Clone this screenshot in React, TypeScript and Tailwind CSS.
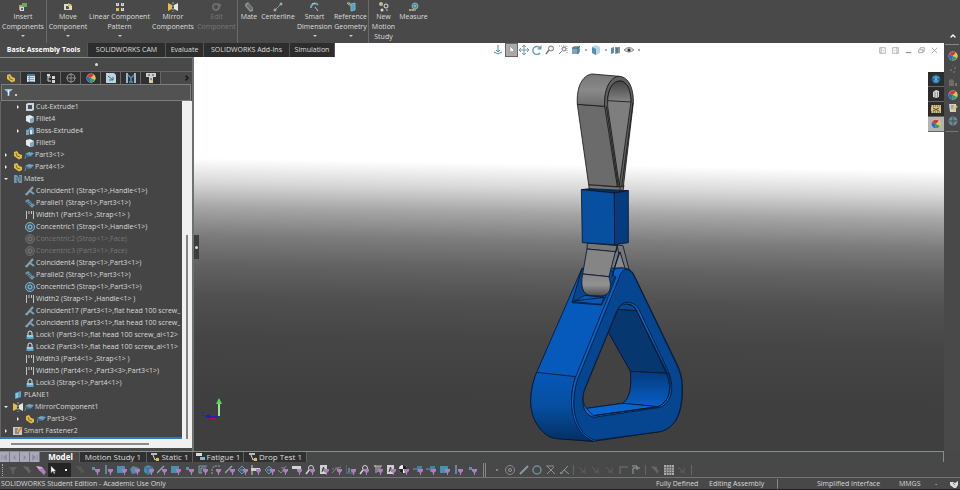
import { ChevronDown, ChevronUp } from 'lucide-react'
import { clsx } from 'clsx'
import type { ReactNode } from 'react'

const STEEL = '#6fa3bf'
const YELLOW = '#e3bd4a'
const PURPLE = '#b27cc2'

const GLYPHS: Record<string, ReactNode> = {
  insert: (
    <>
      <path d="M1 3h5v5H1z" fill="#b8aa62" />
      <path d="M4 1h5v4H4z" fill="#6ea65f" />
      <path d="M2 5h4v4H2z" fill="#dadada" />
      <path d="M3 6h2v2H3z" fill="#4b6f88" />
    </>
  ),
  move: (
    <>
      <path d="M1 2h6l2 2v4H1z" fill="#dcdcd4" />
      <path d="M3 4h3v3H3z" fill="#555" />
      <path d="M5 1l4 2-4 2z" fill={YELLOW} />
    </>
  ),
  pattern: (
    <>
      <path d="M1 1h3v3H1zM6 1h3v3H6zM6 6h3v3H6z" fill="#d6d6d6" />
      <path d="M1 6h3v3H1z" fill={YELLOW} />
      <path d="M2 2h1M7 2h1M7 7h1" stroke="#667" />
    </>
  ),
  mirror: (
    <>
      <path d="M0 1l4 2v4L0 9z" fill={YELLOW} />
      <path d="M10 1L6 3v4l4 2z" fill="#e6e6e6" />
      <path d="M5 0v10" stroke="#9ab" strokeDasharray="2 1" />
    </>
  ),
  edit: (
    <>
      <circle cx="4" cy="5" r="3" stroke="#6b6b6b" strokeWidth="2" />
      <path d="M5 8l4-5M6 2l3 1" stroke="#777" />
    </>
  ),
  clip: (
    <>
      <path d="M1 2l3-2 5 6v3l-3 1-5-6z" fill="#8a8f92" />
      <path d="M3 3l4 5M4 2l4 5" stroke="#555" />
    </>
  ),
  coincident: (
    <>
      <path d="M1 9l7-8" stroke="#8ba0ac" strokeWidth="2" />
      <path d="M5 5l4 3" stroke={STEEL} strokeWidth="2" />
      <path d="M0 8h3" stroke={STEEL} />
    </>
  ),
  parallel: (
    <>
      <path d="M0 3l3-2 7 6-3 3z" fill="#6d93a7" />
      <path d="M2 4l4 3M4 3l4 3" stroke="#3f5663" />
    </>
  ),
  width: <path d="M1.500 1v8M8.500 1v8M4 1v3M6.500 1v3" stroke="#c4c4c4" />,
  concentric: (
    <>
      <circle cx="5" cy="5" r="4.500" fill="#40606f" stroke="#86b4ca" />
      <circle cx="5" cy="5" r="2" stroke="#8fc0d8" />
    </>
  ),
  concentricOff: (
    <>
      <circle cx="5" cy="5" r="4.500" fill="#555" stroke="#6b6b6b" />
      <circle cx="5" cy="5" r="2" stroke="#777" />
    </>
  ),
  lock: (
    <>
      <path d="M3 5V3a2 2 0 0 1 4 0v2" stroke="#dce6ea" />
      <path d="M1.500 5h7v4h-7z" fill="#55a5cf" />
      <path d="M2 6h6" stroke="#e7f4fa" />
    </>
  ),
  part: (
    <>
      <path d="M1 2l3-1 2 3 3 1v3L6 9.500 1 6z" fill={YELLOW} />
      <path d="M3 3l1 3 3 1" stroke="#8a6a17" />
    </>
  ),
  cap: (
    <>
      <path d="M1 4l4-2 5 1-3 3z" fill={STEEL} />
      <path d="M2 5l-1 4M3 6h4l1-2" stroke="#4f93b8" />
    </>
  ),
  cut: (
    <>
      <path d="M1 2l2-1h6v7L7 9H1z" fill="#cfd6da" />
      <path d="M3 3h4v4H3z" fill="#41525c" />
    </>
  ),
  fillet: (
    <>
      <path d="M1 2l4-1 4 2v5L5 9 1 7z" fill="#e3e9ec" />
      <path d="M5 5l4-2v5L5 9z" fill="#79aac5" />
    </>
  ),
  boss: (
    <>
      <path d="M1 4l3-1v6H1zM4 2l3-1 2 2v5L5 9z" fill={STEEL} />
      <path d="M5 4h2v4H5z" fill="#dbe6eb" />
    </>
  ),
  mates: (
    <>
      <path d="M1 1h3l2 3V1h3v8H6L4 6v3H1z" fill="#6f97aa" />
      <path d="M4 3v5M7 2v5" stroke="#46616e" />
    </>
  ),
  plane: (
    <>
      <path d="M2 3l6-2v6L2 9z" fill="#5ba5cd" />
      <path d="M4 3v5" stroke="#b9e0f2" />
    </>
  ),
  fastener: (
    <>
      <path d="M0 1h9v8H0z" fill="#cfc8bd" />
      <path d="M2 3h3M2 5h2M2 7h4" stroke="#554c44" />
      <path d="M5 6l4-5" stroke="#d5862f" strokeWidth="2" />
    </>
  ),
  centerline: (
    <>
      <path d="M1 9l8-8" stroke={STEEL} />
      <circle cx="2" cy="8" r="1" stroke="#bbb" />
      <circle cx="8" cy="2" r="1" stroke="#bbb" />
    </>
  ),
  dimension: (
    <>
      <path d="M1 6a4 4 0 0 1 7-3" stroke={STEEL} strokeWidth="2" />
      <path d="M2 2l3-1M5 5l3 4" stroke="#b8c6cc" />
    </>
  ),
  reference: (
    <>
      <path d="M1 1l2 2M5 2l4-1v7L5 9z" fill="#5a9fc0" stroke="#73b6d3" />
      <path d="M1 1h3v3" stroke="#d8c070" />
    </>
  ),
  motion: (
    <>
      <circle cx="2" cy="2" r="2" fill="#cdb896" />
      <circle cx="7" cy="4" r="2" stroke="#e4e4e4" />
      <circle cx="3" cy="8" r="1.500" fill="#d9d9d9" />
      <circle cx="8" cy="8" r="1" fill="#999" />
    </>
  ),
  measure: (
    <>
      <circle cx="6" cy="4" r="3" fill="#3d91aa" stroke="#87aebb" />
      <path d="M0 8h7M1 7v2M4 7v2" stroke="#cfc28e" />
      <path d="M5 4h2" stroke="#e9d36c" />
    </>
  ),
  list: (
    <>
      <path d="M1 1h8v8H1z" fill="#d8e2e7" />
      <path d="M1 2h8" stroke="#3a7ea6" strokeWidth="2" />
      <path d="M2 4.500h6M2 6.500h6M2 8.500h6M3.500 3v6" stroke="#5a87a1" strokeWidth=".7" />
    </>
  ),
  tree: (
    <>
      <path d="M2 1v7h3M2 4h3" stroke="#d5d5d5" />
      <path d="M1 1h3v2H1zM6 3h3v3H6zM6 7h3v3H6z" fill="#d5d5d5" />
    </>
  ),
  target: (
    <>
      <circle cx="5" cy="5" r="4" stroke="#8d8d8d" />
      <path d="M5 0v10M0 5h10" stroke="#8d8d8d" />
    </>
  ),
  ball: (
    <>
      <circle cx="5" cy="5" r="4.500" fill="#e0e0e0" />
      <path d="M5 5L1 3a4.500 4.500 0 0 1 7-1z" fill="#d4392d" />
      <path d="M5 5l3-3a4.500 4.500 0 0 1 1 5z" fill="#e8c53b" />
      <path d="M5 5l4 2a4.500 4.500 0 0 1-5 2z" fill="#39a04a" />
      <path d="M5 5L4 9.400A4.500 4.500 0 0 1 1 3z" fill="#3568b8" />
    </>
  ),
  sheet: (
    <>
      <path d="M0 0h8l2 2v8H0z" fill="#bfd3dd" />
      <path d="M2 3l5 4M7 4v3H3" stroke="#2d6f93" />
    </>
  ),
  brace: (
    <>
      <path d="M0 0h2v10H0zM8 0h2v10H8z" fill="#9fb7c3" />
      <path d="M2 2l3 3v4M8 2L5 5M3 9h4" stroke="#4a93b9" strokeWidth="1.500" />
    </>
  ),
  bolt: (
    <>
      <path d="M0 0h10v4H0zM3 3h4v7H3z" fill="#cfcfcf" />
      <path d="M2 2h2M6 2h2M4 6h2" stroke="#444" />
      <path d="M4 8h3" stroke={YELLOW} />
    </>
  ),
  funnel: (
    <>
      <path d="M0 1h10L6 5v4H4V5z" fill="#8fc3dc" />
      <path d="M5 2v6" stroke="#eef7fb" />
    </>
  ),
  anchor: <path d="M5 0v7M3 5l2 2 2-2M1 7l4 2 4-2" stroke="#4f8aac" />,
  arrow: <path d="M3 1v7l2-2 1 3 1-1-1-2h2z" fill="#fff" stroke="#777" strokeWidth=".5" />,
  pan: <path d="M5 0v10M0 5h10M3 2l2-2 2 2M3 8l2 2 2-2M2 3L0 5l2 2M8 3l2 2-2 2" stroke="#6f9aaf" />,
  rotate: (
    <>
      <path d="M8 3a4 4 0 1 0 0 5" stroke="#67a0bc" strokeWidth="1.500" />
      <path d="M9.500 0v4.500H5z" fill="#67a0bc" />
    </>
  ),
  zoom: (
    <>
      <circle cx="6" cy="3.500" r="2.500" fill="#e9f1f5" stroke="#777" />
      <path d="M4 5L1 9" stroke="#777" strokeWidth="1.500" />
    </>
  ),
  zoomArea: (
    <>
      <path d="M1 1h8v8" stroke="#999" strokeDasharray="1 1" />
      <circle cx="6" cy="4" r="2" fill="#e9f1f5" stroke="#777" />
      <path d="M4 6L1 9" stroke="#777" />
    </>
  ),
  cube: (
    <>
      <path d="M1 3l2-2h6v6L7 9H1z" fill="#79a6bd" />
      <path d="M1 3h6v6M7 3l2-2" stroke="#47606d" />
    </>
  ),
  box: (
    <>
      <path d="M1 2l4-2 4 2v6l-4 2-4-2z" fill="#b9d5e2" />
      <path d="M1 2l4 2v6L1 8z" fill="#4f93b4" />
    </>
  ),
  twin: (
    <>
      <path d="M0 3l3-1v6l-3 1z" fill="#4f93b4" />
      <path d="M4 2h5v6l-5 1z" fill="#829aa7" />
      <path d="M6 3v5" stroke="#465661" />
    </>
  ),
  eye: (
    <>
      <path d="M0 5q5-5 10 0-5 4-10 0z" fill="#d5d5d5" stroke="#888" />
      <circle cx="5" cy="5" r="1.500" fill="#333" />
    </>
  ),
  panelLeft: <path d="M1 1h8v8H1zM3 1v8M6 4v2" stroke="#999" />,
  panelRight: <path d="M1 1h8v8H1zM7 1v8M4 4v2" stroke="#999" />,
  minimize: <path d="M1 8h8" stroke="#888" strokeWidth="1.500" />,
  restore: <path d="M3 3V1h6v5H7M1 4h6v4H1z" stroke="#888" />,
  close: <path d="M1 1l8 8M9 1L1 9" stroke="#888" />,
  wheel: (
    <>
      <circle cx="5" cy="5" r="4.500" fill="#1d658e" />
      <path d="M2 4q3-3 6 0M5 3v6M3 8l2-4 2 4" stroke="#71b9dc" />
    </>
  ),
  books: (
    <>
      <path d="M2 3l3-2 3 1v6L5 9 2 8z" fill="#d8d8d8" />
      <path d="M4 3v6M6.500 3v5" stroke="#666" strokeWidth=".7" />
    </>
  ),
  film: (
    <>
      <path d="M0 1h10v8H0z" fill="#d8c07d" />
      <path d="M0 2h10M0 8h10" stroke="#5b5240" strokeDasharray="1 1" />
      <path d="M2 4l6 3M8 4L2 7" stroke="#5b5240" />
    </>
  ),
  dots: <path d="M2 5h2v2H2zM6 3h2v2H6zM5 7h2v2H5zM4 1h1v1H4z" fill="#686868" />,
  gray: (
    <>
      <path d="M1 3l3-1 2 2v5H1z" fill="#6d6d6d" />
      <path d="M7 6h2v3H7z" fill="#777" />
    </>
  ),
  note: (
    <>
      <path d="M1 1h7v8H2z" fill="#cfd2cf" />
      <path d="M3 3h3M3 5h2" stroke="#777" />
      <path d="M5 7l4-4" stroke={YELLOW} strokeWidth="2" />
    </>
  ),
  globe: (
    <>
      <circle cx="5" cy="5" r="4.500" fill="#6d8a99" />
      <path d="M5 1v8M1 5h8" stroke="#3e4d55" />
    </>
  ),
  world: (
    <>
      <path d="M1 3h3l2 1 3-2v4L7 9H5L1 6z" fill="#dcdcdc" />
      <path d="M4 4l2 2" stroke="#777" />
    </>
  ),
  study: (
    <>
      <path d="M1 1h6v2H1z" fill="#bcbcbc" />
      <path d="M3 3l2 5 3-2" stroke="#d9d9d9" />
      <path d="M6 6h3v3H6z" fill={YELLOW} />
    </>
  ),
  fatigue: (
    <>
      <path d="M0 1h6v3H0z" fill="#dcdcdc" />
      <path d="M4 5h5v3H4z" fill="#8db4c8" />
    </>
  ),
  first: <path d="M2 2v6M7 2L4 5l3 3z" fill="#8d8ba4" stroke="#8d8ba4" />,
  prev: <path d="M6 2L3 5l3 3z" fill="#8d8ba4" />,
  next: <path d="M4 2l3 3-3 3z" fill="#8d8ba4" />,
  last: <path d="M8 2v6M3 2l3 3-3 3z" fill="#8d8ba4" stroke="#8d8ba4" />,
  // sketch and filter symbols of the lower bar
  tri: <path d="M1 2h8L6 6v3H4V6z" fill="#606060" />,
  tris: <path d="M1 1l6 1v5L4 5zM5 5h4L7 9z" fill="#666" />,
  filters: (
    <>
      <path d="M0 1l6 1 3 5-5-1z" fill="#d5b3e0" />
      <path d="M2 4l5-1 3 4-2 3-3-3z" fill={PURPLE} />
    </>
  ),
  vertex: <path d="M2 2h3v3H2z" fill="#5c8fa9" />,
  edge: <path d="M3 0v9" stroke="#6e9eb5" strokeWidth="1.500" />,
  face: <path d="M0 1h8v7H0z" fill="#4b8fb5" />,
  surface: <path d="M0 4l3-3 6 2-2 5-5 1z" fill="#568ba7" />,
  solid: (
    <>
      <path d="M0 2l4-2 5 2v5L4 10 0 7z" fill="#4689ad" />
      <path d="M0 2l4 2 5-2M4 4v5" stroke="#2f617e" strokeWidth=".7" />
    </>
  ),
  slash: <path d="M0 8l7-7" stroke="#87a6b5" strokeWidth="1.500" />,
  frame: <path d="M1 8V1h8M3 8V3h5M1 8h3" stroke="#84a3b1" />,
  arc: <path d="M1 9V5q0-4 5-4h3" stroke="#9aaab0" strokeDasharray="2 1" />,
  diamond: <path d="M0 5l4-4 4 4-4 4zM2 5h4" stroke="#6b95aa" fill="#3f5865" />,
  cross: (
    <>
      <path d="M1 0v10" stroke="#d0d0d0" />
      <path d="M0 3h9v3H0z" fill="#d0d0d0" />
    </>
  ),
  check: <path d="M0 5l3 3 5-7M3 3h3" stroke="#8a8a8a" />,
  tag: <path d="M0 1h9v3H0z" fill="#d2d2d2" />,
  lens: (
    <>
      <circle cx="6" cy="3" r="2.500" stroke="#d2d2d2" />
      <path d="M1 9l3-4" stroke="#d2d2d2" strokeWidth="1.500" />
    </>
  ),
  letter: (
    <>
      <path d="M1 0h7v9H1z" fill="#d0d0d0" />
      <path d="M3 7l1.500-5L6 7M3 5h3" stroke="#3a3a3a" />
    </>
  ),
  weld: <path d="M0 8l4-4 5-2M1 3v2M3 3h4" stroke="#818181" />,
  bars: (
    <>
      <path d="M0 0v8h9" stroke="#61818f" />
      <path d="M2 3h2v4H2zM5 5h2v2H5z" fill="#61818f" />
    </>
  ),
  sign: <path d="M1 1h2v7M5 1v6M7 1v6M1 1h8" stroke="#bababa" />,
  mass: (
    <>
      <circle cx="4" cy="4" r="4" fill="#eee" />
      <path d="M4 4V0A4 4 0 0 1 8 4zM4 4v4A4 4 0 0 1 0 4z" fill="#222" />
    </>
  ),
  plug: (
    <>
      <path d="M0 4h4" stroke="#689bb4" />
      <path d="M4 1h5v6H4z" fill="#3f84a8" />
    </>
  ),
  point: <path d="M4 5h2" stroke={STEEL} strokeWidth="1.500" />,
  ring: (
    <>
      <circle cx="5" cy="5" r="4.500" stroke="#8b8b8b" />
      <circle cx="5" cy="5" r="1.500" stroke="#9a9a9a" />
    </>
  ),
  line: <path d="M1 9l8-8" stroke="#8a9aa0" strokeWidth="2" />,
  circle: <circle cx="5" cy="5" r="4" stroke="#6c8e9d" strokeWidth="1.500" />,
  tangent: <path d="M1 1l8 8M1 9l7-7M0 1h8" stroke="#909090" />,
  angle: <path d="M1 9l8-8M1 8h3M5 5l5 4" stroke="#8c989d" />,
  dimLine: <path d="M1 2l7 7M3 7h4V3" stroke="#5f5f5f" />,
  corner: <path d="M2 9V2h8" stroke="#656565" strokeWidth="1.500" />,
  cornerOn: <path d="M2 9V3h7M1 1h5v4" stroke="#949f9f" />,
  grid: (
    <>
      <path d="M0 0h10v10H0z" fill="#ababab" />
      <path d="M0 2.500h10M0 5h10M0 7.500h10M2.500 0v10M5 0v10M7.500 0v10" stroke="#5a5a5a" strokeWidth=".7" />
    </>
  ),
}

interface GlyphProps {
  name: string
  filtered?: boolean
  className?: string
}

function Glyph({ name, filtered, className }: GlyphProps) {
  return (
    <svg viewBox="0 0 10 10" fill="none" className={clsx('size-2.5 shrink-0', className)} aria-hidden="true">
      {GLYPHS[name]}
      {filtered ? <path d="M5 4h5v2L8 8v2H7V8L5 6z" fill={PURPLE} /> : null}
    </svg>
  )
}

interface RibbonItem {
  icon: string
  label: string
  width: string
  menu?: boolean
  disabled?: boolean
  divider?: boolean
}

const RIBBON: RibbonItem[] = [
  { icon: 'insert', label: 'Insert\nComponents', width: 'w-[47px]', menu: true, divider: true },
  { icon: 'move', label: 'Move\nComponent', width: 'w-[42px]', menu: true },
  { icon: 'pattern', label: 'Linear Component\nPattern', width: 'w-[61px]', menu: true },
  { icon: 'mirror', label: 'Mirror\nComponents', width: 'w-[46px]' },
  { icon: 'edit', label: 'Edit\nComponent', width: 'w-[42px]', disabled: true, divider: true },
  { icon: 'clip', label: 'Mate', width: 'w-[22px]' },
  { icon: 'centerline', label: 'Centerline', width: 'w-[36px]' },
  { icon: 'dimension', label: 'Smart\nDimension', width: 'w-[37px]', menu: true },
  { icon: 'reference', label: 'Reference\nGeometry', width: 'w-[36px]', menu: true, divider: true },
  { icon: 'motion', label: 'New\nMotion\nStudy', width: 'w-[29px]' },
  { icon: 'measure', label: 'Measure', width: 'w-[31px]' },
]

function Ribbon() {
  return (
    <header className="flex h-[43px] shrink-0 bg-[#494949]">
      {RIBBON.map((item) => (
        <button
          key={item.label}
          type="button"
          disabled={item.disabled}
          className={clsx(
            'flex shrink-0 flex-col items-center pt-0.5 leading-[10px]',
            item.width,
            item.divider && 'border-r border-[#6a6a6a]',
            item.disabled ? 'text-[#777]' : 'text-[#dedede]',
          )}
        >
          <Glyph name={item.icon} />
          <span className="whitespace-pre text-center">{item.label}</span>
          {item.menu ? <span className="mt-[3px] border-x-2 border-t-2 border-x-transparent border-t-[#ccc]" /> : null}
        </button>
      ))}
      <button type="button" aria-label="Collapse ribbon" className="ml-auto self-end pr-[3px] pb-[3px]">
        <ChevronUp className="size-2 text-white" strokeWidth={4} />
      </button>
    </header>
  )
}

const COMMAND_TABS = [
  { label: 'Basic Assembly Tools', width: 'w-[88px]' },
  { label: 'SOLIDWORKS CAM', width: 'w-[78px]' },
  { label: 'Evaluate', width: 'w-[38px]' },
  { label: 'SOLIDWORKS Add-Ins', width: 'w-[86px]' },
  { label: 'Simulation', width: 'w-[45px]' },
]

const VIEW_TOOLS = [
  { icon: 'anchor', label: 'Orientation' },
  { icon: 'arrow', label: 'Select' },
  { icon: 'pan', label: 'Pan' },
  { icon: 'rotate', label: 'Rotate' },
  { icon: 'zoom', label: 'Zoom to fit' },
  { icon: 'zoomArea', label: 'Zoom to area' },
  { icon: 'cube', label: 'View orientation', menu: true },
  { icon: 'box', label: 'Display style', menu: true },
  { icon: 'twin', label: 'Section view' },
  { icon: 'eye', label: 'Hide or show items', menu: true },
]

const WINDOW_TOOLS = ['panelLeft', 'panelRight', 'minimize', 'restore', 'close']

function CommandBar() {
  return (
    <div className="flex h-3.5 shrink-0 bg-white">
      <nav className="flex shrink-0 bg-[#2d2d2d]">
        {COMMAND_TABS.map((tab, i) => (
          <button
            key={tab.label}
            type="button"
            className={clsx(
              'shrink-0 whitespace-nowrap border-r border-[#555]',
              tab.width,
              i === 0 ? 'bg-[#494949] font-bold text-white' : 'text-[#dedede]',
            )}
          >
            {tab.label}
          </button>
        ))}
      </nav>
      {/* the right padding centres the tools over the graphics area */}
      <div className="flex flex-1 items-center justify-center pr-[78px]">
        {VIEW_TOOLS.map((tool) => (
          <button
            key={tool.label}
            type="button"
            aria-label={tool.label}
            className={clsx(
              'flex h-3.5 shrink-0 items-center pl-[1px]',
              tool.menu ? 'w-5 gap-1' : 'w-[13px]',
              tool.icon === 'arrow' && 'border border-[#666] bg-[#aaa]',
            )}
          >
            <Glyph name={tool.icon} />
            {tool.menu ? <span className="size-0.5 shrink-0 bg-[#aaa]" /> : null}
          </button>
        ))}
      </div>
      <div className="flex items-center gap-1 pr-[5px]">
        {WINDOW_TOOLS.map((name) => (
          <button key={name} type="button" aria-label={name} className="px-[1px]">
            <Glyph name={name} className="size-[7px]" />
          </button>
        ))}
      </div>
    </div>
  )
}

interface TreeRow {
  label: string
  icons: string[]
  level: number
  arrow?: 'open' | 'closed'
  dim?: boolean
}

const TREE: TreeRow[] = [
  { label: 'Cut-Extrude1', icons: ['cut'], level: 1, arrow: 'closed' },
  { label: 'Fillet4', icons: ['fillet'], level: 1 },
  { label: 'Boss-Extrude4', icons: ['boss'], level: 1, arrow: 'closed' },
  { label: 'Fillet9', icons: ['fillet'], level: 1 },
  { label: 'Part3<1>', icons: ['part', 'cap'], level: 0, arrow: 'closed' },
  { label: 'Part4<1>', icons: ['part', 'cap'], level: 0, arrow: 'closed' },
  { label: 'Mates', icons: ['mates'], level: 0, arrow: 'open' },
  { label: 'Coincident1 (Strap<1>,Handle<1>)', icons: ['coincident'], level: 1 },
  { label: 'Parallel1 (Strap<1>,Part3<1>)', icons: ['parallel'], level: 1 },
  { label: 'Width1 (Part3<1> ,Strap<1> )', icons: ['width'], level: 1 },
  { label: 'Concentric1 (Strap<1>,Handle<1>)', icons: ['concentric'], level: 1 },
  { label: 'Concentric2 (Strap<1>,Face)', icons: ['concentricOff'], level: 1, dim: true },
  { label: 'Concentric3 (Part3<1>,Face)', icons: ['concentricOff'], level: 1, dim: true },
  { label: 'Coincident4 (Strap<1>,Part3<1>)', icons: ['coincident'], level: 1 },
  { label: 'Parallel2 (Strap<1>,Part3<1>)', icons: ['parallel'], level: 1 },
  { label: 'Concentric5 (Strap<1>,Part3<1>)', icons: ['concentric'], level: 1 },
  { label: 'Width2 (Strap<1> ,Handle<1> )', icons: ['width'], level: 1 },
  { label: 'Coincident17 (Part3<1>,flat head 100 screw_', icons: ['coincident'], level: 1 },
  { label: 'Coincident18 (Part3<1>,flat head 100 screw_', icons: ['coincident'], level: 1 },
  { label: 'Lock1 (Part3<1>,flat head 100 screw_ai<12>', icons: ['lock'], level: 1 },
  { label: 'Lock2 (Part3<1>,flat head 100 screw_ai<11>', icons: ['lock'], level: 1 },
  { label: 'Width3 (Part4<1> ,Strap<1> )', icons: ['width'], level: 1 },
  { label: 'Width5 (Part4<1> ,Part3<3>,Part3<1>)', icons: ['width'], level: 1 },
  { label: 'Lock3 (Strap<1>,Part4<1>)', icons: ['lock'], level: 1 },
  { label: 'PLANE1', icons: ['plane'], level: 0 },
  { label: 'MirrorComponent1', icons: ['mirror', 'cap'], level: 0, arrow: 'open' },
  { label: 'Part3<3>', icons: ['part', 'cap'], level: 1, arrow: 'closed' },
  { label: 'Smart Fastener2', icons: ['fastener'], level: 0, arrow: 'closed' },
]

const PANEL_TABS = ['part', 'list', 'tree', 'target', 'ball', 'sheet', 'brace', 'bolt']

function FeaturePanel() {
  return (
    <aside className="flex w-[194px] shrink-0 flex-col border-t border-r-2 border-t-[#858d8d] border-r-[#6b7070] bg-[#494949]">
      <div className="flex h-3.5 items-center justify-center border-b border-[#666]">
        <span className="size-[3px] rounded-full bg-[#ddd]" />
      </div>
      <div className="ml-[1px] flex h-3 items-stretch">
        {PANEL_TABS.map((name, i) => (
          <button
            key={name}
            type="button"
            aria-label={name}
            className={clsx(
              'flex w-5 items-center justify-center border-r border-[#666]',
              i === 0 ? 'bg-[#494949]' : 'bg-[#303030]',
            )}
          >
            <Glyph name={name} />
          </button>
        ))}
        <button type="button" aria-label="More tabs" className="ml-auto pr-[1px]">
          <ChevronDown className="size-2 -rotate-90 text-[#111]" strokeWidth={4} />
        </button>
      </div>
      <div className="mx-[1px] flex h-[17px] items-center gap-0.5 border border-[#7a8080] bg-[#525252] pl-0.5">
        <Glyph name="funnel" className="size-[9px]" />
        <span className="mt-1 size-[2px] bg-[#ccc]" />
      </div>
      <div className="flex">
        <div className="min-w-0 flex-1 overflow-hidden border-l border-[#666] bg-[#454545]">
          <ul>
            {TREE.map((row) => (
              <li
                key={row.label}
                className={clsx(
                  'flex h-3 items-center gap-[1px] whitespace-nowrap',
                  row.level === 0 ? 'pl-[3px]' : 'pl-[15px]',
                  row.dim ? 'text-[#777]' : 'text-[#dadada]',
                )}
              >
                <span className="flex w-2 shrink-0 items-center">
                  {row.arrow === 'closed' ? <span className="ml-[1px] border-y-2 border-l-2 border-y-transparent border-l-[#eee]" /> : null}
                  {row.arrow === 'open' ? <span className="border-x-2 border-t-2 border-x-transparent border-t-[#eee]" /> : null}
                </span>
                {row.icons.map((icon) => (
                  <Glyph key={icon} name={icon} />
                ))}
                <span>{row.label}</span>
              </li>
            ))}
          </ul>
          <div className="h-[2px] bg-[#2f7db8]" />
        </div>
        <div className="flex w-[10px] flex-col items-center bg-[#f0f0f0]">
          <div className="mt-[134px] w-[2px] flex-1 bg-[#828282]" />
        </div>
      </div>
      <div className="flex h-[9px] items-center bg-[#f0f0f0] pl-[11px]">
        <div className="h-[2px] w-[138px] bg-[#8a8a8a]" />
      </div>
    </aside>
  )
}

function Model() {
  return (
    <svg viewBox="194 57 750 394" className="block h-full w-full" role="img" aria-label="Handle assembly">
      <defs>
        <linearGradient id="bend" x1="0" y1="0" x2="0" y2="1">
          <stop offset="0" stopColor="#777" />
          <stop offset=".5" stopColor="#898989" />
          <stop offset="1" stopColor="#6c6c6c" />
        </linearGradient>
        <linearGradient id="inside" x1="0" y1="0" x2="0" y2="1">
          <stop offset="0" stopColor="#444" />
          <stop offset="1" stopColor="#858585" />
        </linearGradient>
        <linearGradient id="hook" x1="0" y1="0" x2="0" y2="1">
          <stop offset="0" stopColor="#858585" />
          <stop offset=".5" stopColor="#929292" />
          <stop offset="1" stopColor="#4a4a4a" />
        </linearGradient>
        <linearGradient id="shell" x1="0" y1="0" x2="0" y2="1">
          <stop offset="0" stopColor="#0558b8" />
          <stop offset=".5" stopColor="#064e9f" />
          <stop offset="1" stopColor="#052f63" />
        </linearGradient>
        <linearGradient id="wall" x1="0" y1="0" x2="0" y2="1">
          <stop offset="0" stopColor="#063a7c" />
          <stop offset="1" stopColor="#0560c6" />
        </linearGradient>
      </defs>

      {/* upper strap loop */}
      <g transform="translate(480 40) scale(.33333)" stroke="#181818" strokeWidth="2.500" strokeLinejoin="round">
        <path d="M326 434L410 441L432 436L428 456L410 458L328 449Z" fill="#747474" />
        <path d="M292 193L378 199L414 440L326 434Z" fill="#6b6b6b" />
        <path d="M292 193C289 145 305 106 336 102L418 109C390 113 372 150 374 199Z" fill="url(#bend)" />
        <path d="M374 199C371 150 390 109 418 109C446 111 461 145 460 188L430 440L412 440Z" fill="#606060" />
        <path d="M383 182C384 148 398 123 421 123C442 125 452 150 453 186L418 436L383 200Z" fill="#7e7e7e" />
        <path d="M383 182C384 148 398 123 421 123C442 125 452 150 453 186Z" fill="url(#inside)" />
        <path d="M379 199L415 440M459 188L425 440M420 436V456" fill="none" />
      </g>

      <g transform="translate(520 180) scale(.33333)" stroke="#08162a" strokeWidth="2.500" strokeLinejoin="round">
        {/* back of the lower strap */}
        <path d="M289 195L309 197L328 272L316 274L300 216L282 268L270 264L287 212Z" fill="#777" />
        <path d="M300 216L316 268L282 268Z" fill="#8a8a8a" />

        {/* handle body */}
        <path d="M186 265L50 577C25 640 25 700 58 743C74 765 90 773 112 776L220 784L300 540L310 264Z" fill="#055abc" />
        <path d="M50 577L167 590C145 650 150 745 220 784L112 776C90 773 74 765 58 743C25 700 25 640 50 577Z" fill="url(#shell)" />
        <path d="M186 265L156 368L245 375L288 286L272 270Z" fill="#06458f" />
        <path d="M160 365L195 346L252 352L244 373Z" fill="#0758b2" />
        <path d="M163 363L252 352" fill="none" />
        <path
          d="M280 270C290 262 315 263 325 267C338 272 342 285 348 297L470 550C482 575 487 595 487 620C490 700 465 745 420 755L220 784C160 760 140 680 165 595L288 292L280 285Z"
          fill="#0561c7"
        />
        <path
          d="M317 268C335 270 341 285 347 298L469 552C480 575 486 595 486 620C488 700 465 745 420 755L227 781C172 765 145 690 172 600L296 297C300 282 307 270 317 268Z"
          fill="#064590"
        />

        {/* opening */}
        <path
          d="M322 367C345 368 353 381 360 394L445 575C465 620 455 670 420 682L222 712C190 705 180 670 195 625L289 397C298 378 308 367 322 367Z"
          fill="#0861c4"
        />
        <path d="M294 388L350 392L443 580L331 574L265 457Z" fill="#06376f" />
        <path d="M298 379Q322 363 345 382L350 392L294 388Z" fill="#064992" />
        <path d="M331 574L445 580C460 625 446 672 410 680L308 670C331 650 334 620 331 574Z" fill="url(#wall)" />
        <path d="M265 457L331 574C335 620 330 655 308 670L200 685C184 668 187 640 200 615Z" fill="#424242" />
        <path d="M200 685L308 670L414 680L220 707Z" fill="#0865cd" />
        <path d="M322 373C339 375 346 385 352 398L438 578C457 620 450 665 414 680L225 706" fill="none" />

        {/* front of the lower strap */}
        <path d="M202 189L292 197L288 216L201 207Z" fill="#777" />
        <path d="M201 207L286 215L267 290L188 282Z" fill="#858585" />
        <path d="M188 282L267 290C277 325 269 345 247 348L212 347C188 345 181 318 188 282Z" fill="url(#hook)" />
        <path d="M286 215L292 197L296 220L276 292" fill="none" />

        {/* sleeve */}
        <path d="M184 29L208 26L325 32L283 39Z" fill="#033064" />
        <path d="M184 29L283 39L284 194L187 188Z" fill="#06509f" />
        <path d="M283 39L325 32L325 188L284 194Z" fill="#043c7d" />
      </g>

      {/* origin triad */}
      <g strokeWidth="2">
        <path d="M219 416V402" stroke="#9ee29a" />
        <path d="M219 398L216 404H222Z" fill="#57d957" />
        <path d="M208 418H216" stroke="#b01822" />
        <path d="M219 417H207" stroke="#2525b8" />
        <path d="M210 414L204 416L210 419Z" fill="#2020b0" />
      </g>
      <text x="200" y="416" fontSize="6" fill="#2626c0">
        Z
      </text>
      <text x="217" y="396" fontSize="6" fill="#1f5c1f">
        Y
      </text>
    </svg>
  )
}

const TASK_TABS = ['wheel', 'books', 'film', 'ball']

function Viewport() {
  return (
    <main className="relative min-w-0 flex-1 bg-[linear-gradient(181deg,#fff_28%,#d8d8d8_34%,#a6a6a6_40%,#7c7c7c_47%,#626262_54%,#505050_62%,#454545_72%,#3f3f3f_87%)]">
      <Model />
      <button
        type="button"
        aria-label="Collapse panel"
        className="absolute top-[178px] left-0 flex h-6 w-[5px] items-center justify-center bg-[#3c3c3c]"
      >
        <span className="size-[3px] rounded-full bg-[#ddd]" />
      </button>
      <div className="absolute top-[15px] right-0 flex flex-col">
        {TASK_TABS.map((name) => (
          <button
            key={name}
            type="button"
            aria-label={name}
            className={clsx(
              'flex h-[15px] w-4 items-center justify-center border-b border-[#666]',
              name === 'ball' ? 'bg-[#b4b4b4]' : 'bg-[#2b2b2b]',
            )}
          >
            <Glyph name={name} />
          </button>
        ))}
      </div>
    </main>
  )
}

const RAIL = ['ball', 'dots', 'gray', 'ball', 'note', 'globe']

function RightRail() {
  return (
    <div className="flex w-4 shrink-0 flex-col items-center bg-[#494949]">
      <div className="mt-[1px] h-[1px] w-3.5 bg-[#888]" />
      <div className="mt-1 flex flex-col border-b border-[#777] pb-1 pl-[2px]">
        {RAIL.map((name, i) => (
          <button key={i} type="button" aria-label={name} className="flex h-[13px] items-center">
            <Glyph name={name} />
          </button>
        ))}
      </div>
    </div>
  )
}

const STUDY_TABS = [
  { label: 'Model', width: 'w-[38px]' },
  { label: 'Motion Study 1', width: 'w-[67px]' },
  { label: 'Static 1', icon: 'study', width: 'w-[46px]' },
  { label: 'Fatigue 1', icon: 'fatigue', width: 'w-[51px]' },
  { label: 'Drop Test 1', icon: 'study', width: 'w-[63px]' },
]

function StudyTabs() {
  return (
    <div className="mr-4 flex h-[11px] shrink-0 border-t border-r border-[#858d8d] bg-[#484848]">
      {['first', 'prev', 'next', 'last'].map((name) => (
        <button key={name} type="button" aria-label={name} className="w-2.5 border-r border-[#77768a] bg-[#aaa8b8]">
          <Glyph name={name} className="size-[9px]" />
        </button>
      ))}
      <nav className="ml-[2px] flex">
        {STUDY_TABS.map((tab, i) => (
          <button
            key={tab.label}
            type="button"
            className={clsx(
              'flex shrink-0 items-center justify-center gap-[1px] whitespace-nowrap border-r border-[#606060] text-[8px]',
              tab.width,
              i === 0 ? 'font-bold text-white' : 'bg-[#303030] text-[#dedede]',
            )}
          >
            {tab.icon ? <Glyph name={tab.icon} className="size-2" /> : null}
            {tab.label}
          </button>
        ))}
      </nav>
    </div>
  )
}

const FILTER_TOOLS = [
  'vertex', 'edge', 'face', 'surface', 'solid', 'slash', 'face', 'vertex', 'frame', 'arc',
  'slash', 'diamond', 'cross', 'diamond', 'check', 'tag', 'lens', 'letter', 'weld', 'bars',
  'lens', 'sign', 'letter', 'mass', 'plug', 'plug', 'face', 'edge', 'vertex',
]

const SKETCH_GROUPS = [
  { width: 'w-[86px]', icons: ['point', 'ring', 'line', 'circle', 'tangent', 'angle'] },
  { width: 'w-[72px]', icons: ['dimLine', 'dimLine', 'dimLine', 'corner', 'cornerOn'] },
  { width: 'w-[46px]', icons: ['tris', 'grid', 'dimLine'] },
]

function FilterBar() {
  return (
    <div className="flex h-4 shrink-0 items-center border-b border-[#707676] bg-[#484848]">
      <span className="ml-[2px] h-3 border-l border-dotted border-[#aaa]" />
      <div className="flex w-[43px] items-center justify-between pl-[5px]">
        {['tri', 'tris', 'filters'].map((name) => (
          <button key={name} type="button" aria-label={name}>
            <Glyph name={name} />
          </button>
        ))}
      </div>
      <button
        type="button"
        aria-label="Select"
        className="ml-[2px] flex h-3.5 w-[23px] items-center justify-between bg-[#242424] pr-1"
      >
        <Glyph name="arrow" />
        <span className="size-[2px] bg-white" />
      </button>
      <Glyph name="tris" className="mx-1 opacity-50" />
      <div className="ml-[1px] flex w-[387px] items-center justify-between">
        {FILTER_TOOLS.map((name, i) => (
          <button key={i} type="button" aria-label={`Filter ${name}`}>
            <Glyph name={name} filtered />
          </button>
        ))}
      </div>
      <span className="mr-[2px] ml-[6px] h-3.5 w-[3px] border-x border-[#888]" />
      {SKETCH_GROUPS.map((group) => (
        <div
          key={group.width}
          className={clsx('flex items-center justify-between border-r border-[#666] px-1', group.width)}
        >
          {group.icons.map((name, i) => (
            <button key={i} type="button" aria-label={name}>
              <Glyph name={name} />
            </button>
          ))}
        </div>
      ))}
    </div>
  )
}

function StatusBar() {
  return (
    <footer className="flex h-3 shrink-0 items-center border-b border-[#202020] bg-[#484848] pl-[1px] text-[#d8d8d8]">
      <span>SOLIDWORKS Student Edition - Academic Use Only</span>
      <div className="ml-auto flex items-center">
        <span className="w-[53px]">Fully Defined</span>
        <span className="w-[69px] border-r border-[#888]">Editing Assembly</span>
        <span className="ml-[39px] w-[82px]">Simplified Interface</span>
        <span className="w-9">MMGS</span>
        <span className="w-3.5">-</span>
        <Glyph name="world" className="mr-[1px] size-2" />
      </div>
    </footer>
  )
}

export default function App() {
  return (
    <div className="flex min-h-screen flex-col overflow-hidden bg-[#484848] font-['Open_Sans','Noto_Sans',sans-serif] text-[7px] leading-[10px]">
      <Ribbon />
      <div className="flex flex-1">
        <div className="flex min-w-0 flex-1 flex-col">
          <CommandBar />
          <div className="flex flex-1">
            <FeaturePanel />
            <Viewport />
          </div>
        </div>
        <RightRail />
      </div>
      <StudyTabs />
      <FilterBar />
      <StatusBar />
    </div>
  )
}
